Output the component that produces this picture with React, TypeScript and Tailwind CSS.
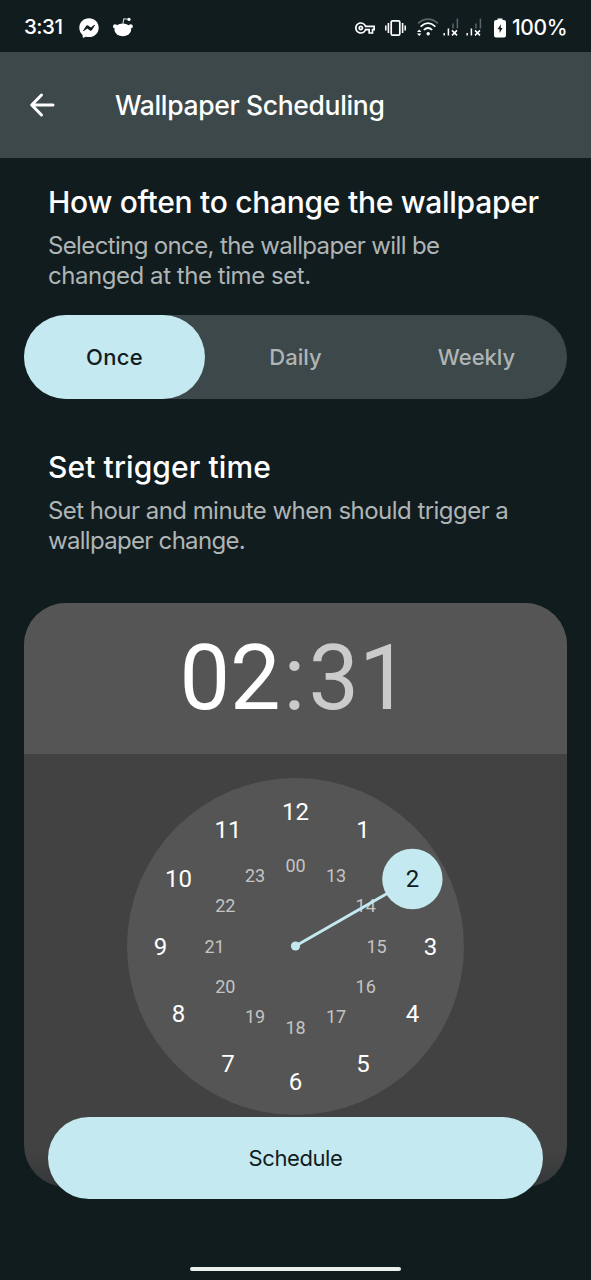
import React from "react";
import { MdOutlineVpnKey } from "react-icons/md";
import { FaFacebookMessenger } from "react-icons/fa";

const outerHours = ["12", "1", "2", "3", "4", "5", "6", "7", "8", "9", "10", "11"];
const innerHours = ["00", "13", "14", "15", "16", "17", "18", "19", "20", "21", "22", "23"];
const selectedHour = 2;

function polar(index: number, radius: number) {
  const angle = (index * Math.PI) / 6;
  return { x: 168.5 + radius * Math.sin(angle), y: 168.5 - radius * Math.cos(angle) };
}

function RedditIcon() {
  return (
    <svg width="20" height="20" viewBox="0 0 20 20" className="block">
      <ellipse cx="9.8" cy="12.8" rx="8.4" ry="6.4" fill="#fff" />
      <circle cx="2.1" cy="9.4" r="2.1" fill="#fff" />
      <circle cx="17.7" cy="9.4" r="2.1" fill="#fff" />
      <path d="M9.9 7 10.8 1.8 15.5 2.3" stroke="#cdd3d4" strokeWidth="1.1" fill="none" />
      <circle cx="16" cy="2.4" r="1.6" fill="#fff" />
    </svg>
  );
}

function VibrateIcon() {
  return (
    <svg width="21" height="18" viewBox="0 0 21 18" fill="none" className="block">
      <rect x="6.2" y="1.8" width="8.6" height="14.4" rx="1.4" stroke="#fff" strokeWidth="1.7" />
      <path d="M3.4 4V14M17.6 4V14" stroke="#fff" strokeWidth="1.6" />
      <path d="M0.8 6.4V11.6M20.2 6.4V11.6" stroke="#fff" strokeWidth="1.5" />
    </svg>
  );
}

function WifiIcon() {
  return (
    <svg width="22" height="20" viewBox="0 0 22 20" fill="none" className="block">
      <path d="M1 5.4Q11 -3 21 5.4" stroke="#59676a" strokeWidth="1.7" />
      <path d="M3.6 8.6Q11 1.8 18.4 8.6" stroke="#fff" strokeWidth="1.7" />
      <path d="M6.8 12Q11 8 15.2 12" stroke="#fff" strokeWidth="1.7" />
      <circle cx="11.2" cy="15.8" r="1.7" fill="#fff" />
      <path d="M0 14 2.2 11.6 4.4 14ZM0 15.6 2.2 18 4.4 15.6Z" fill="#fff" />
    </svg>
  );
}

function SignalIcon() {
  return (
    <svg width="17" height="19" viewBox="0 0 17 19" fill="none" className="block">
      <path d="M1.2 15V17.5M5.4 10.5V17.5" stroke="#fff" strokeWidth="1.5" />
      <path d="M10 5.5V10.5M14.4 0.5V10.5" stroke="#59676a" strokeWidth="1.5" />
      <path d="M9 12.4 14 17.4M14 12.4 9 17.4" stroke="#fff" strokeWidth="1.5" />
    </svg>
  );
}

function BatteryIcon() {
  return (
    <svg width="12" height="20" viewBox="0 0 12 20" className="block">
      <path d="M3.5 0.5h5v1.5H10a2 2 0 0 1 2 2V17.5a2 2 0 0 1-2 2H2a2 2 0 0 1-2-2V4a2 2 0 0 1 2-2H3.5Z" fill="#fff" />
      <path d="M6.8 6.2 3.6 11.2H5.6V15L8.6 9.9H6.8Z" fill="#111c1f" />
    </svg>
  );
}

function StatusBar() {
  return (
    <div className="flex h-[52px] shrink-0 items-center pt-[3px] pl-6 pr-[24px] text-white">
      <span className="w-[55px] text-[20.5px] font-medium tracking-[-0.5px] whitespace-nowrap">3:31</span>
      <FaFacebookMessenger size={20} />
      <span className="ml-[14px] -mt-[2px]"><RedditIcon /></span>
      <span className="ml-auto flex items-center">
        <MdOutlineVpnKey size={20} />
        <span className="ml-[10px]"><VibrateIcon /></span>
        <span className="ml-[11px]"><WifiIcon /></span>
        <span className="ml-[4px]"><SignalIcon /></span>
        <span className="ml-[6px]"><SignalIcon /></span>
        <span className="ml-[11px]"><BatteryIcon /></span>
        <span className="ml-[6px] w-[55px] text-[21px] font-medium tracking-[-0.4px] whitespace-nowrap">100%</span>
      </span>
    </div>
  );
}

function ClockDial() {
  const target = polar(selectedHour, 135);
  return (
    <svg width="337" height="337" viewBox="0 0 337 337" className="block font-[Roboto,sans-serif]">
      <circle cx="168.5" cy="168.5" r="168.5" fill="#555555" />
      {innerHours.map((label, i) => {
        const p = polar(i, 81);
        return (
          <text key={label} x={p.x} y={p.y + 6} textAnchor="middle" fontSize="18" fill="#c4c4c4">
            {label}
          </text>
        );
      })}
      <line x1="168.5" y1="168" x2={target.x} y2={target.y} stroke="#c4e9f0" strokeWidth="3" />
      <circle cx="168.5" cy="168" r="4.6" fill="#c4e9f0" />
      <circle cx={target.x} cy={target.y} r="30.2" fill="#c4e9f0" />
      {outerHours.map((label, i) => {
        const p = polar(i, 135);
        return (
          <text key={label} x={p.x} y={p.y + 8.1} textAnchor="middle" fontSize="24" fill={i === selectedHour ? "#111c1f" : "#ffffff"}>
            {label}
          </text>
        );
      })}
    </svg>
  );
}

export default function App() {
  return (
    <div className="relative flex h-[1280px] w-[591px] flex-col overflow-hidden bg-[#111c1f] font-[Inter,sans-serif]">
      <StatusBar />
      <header className="flex h-[106px] shrink-0 items-center bg-[#3c4849] pl-[29px] text-white">
        <svg width="26" height="26" viewBox="0 0 26 26" fill="none" stroke="#fff" strokeWidth="3" strokeLinecap="round" strokeLinejoin="round">
          <path d="M24 13H3M12.5 3 2.7 13 12.5 23" />
        </svg>
        <h1 className="ml-[60px] text-[26.5px] leading-8 font-medium tracking-[-0.35px] whitespace-nowrap">Wallpaper Scheduling</h1>
      </header>

      <section className="pt-[26px] pl-12">
        <h2 className="text-[30px] leading-9 font-medium tracking-[-0.28px] whitespace-nowrap text-white">How often to change the wallpaper</h2>
        <p className="mt-[11px] text-[24px] leading-[30px] whitespace-nowrap text-[#afb4b5]">
          <span className="tracking-[-0.64px]">Selecting once, the wallpaper will be</span><br />
          <span className="tracking-[-0.45px]">changed at the time set.</span>
        </p>
      </section>

      <div className="mx-6 mt-[24px] grid h-[84px] shrink-0 grid-cols-3 items-center rounded-full bg-[#3c4849] text-center text-[22px] font-medium text-[#afb4b5]">
        <button className="h-full rounded-full bg-[#c4e9f0] tracking-[0.3px] text-[#111c1f]">Once</button>
        <button>Daily</button>
        <button>Weekly</button>
      </div>

      <section className="pt-[50px] pl-12">
        <h2 className="text-[30px] leading-9 font-medium tracking-[0.1px] whitespace-nowrap text-white">Set trigger time</h2>
        <p className="mt-[11px] text-[24px] leading-[30px] whitespace-nowrap text-[#afb4b5]">
          <span className="tracking-[-0.54px]">Set hour and minute when should trigger a</span><br />
          <span className="tracking-[-0.7px]">wallpaper change.</span>
        </p>
      </section>

      <div className="mx-6 mt-[47px] flex h-[584px] shrink-0 flex-col items-center overflow-hidden rounded-[42px] bg-[#424242]">
        <div className="flex h-[151px] w-full shrink-0 items-center justify-center bg-[#555555] pr-[2px] font-[Roboto,sans-serif] text-[90px] leading-none text-[#cbcbcb]">
          <span className="text-white">02</span>
          <span className="mx-[3px]">:</span>
          <span>31</span>
        </div>
        <div className="mt-6"><ClockDial /></div>
      </div>

      <div className="absolute inset-x-0 bottom-0 flex h-[163px] flex-col items-center bg-linear-to-b from-transparent from-20% to-[#111c1f] to-100%">
        <button className="h-[82px] w-[495px] shrink-0 rounded-full bg-[#c4e9f0] text-[22px] tracking-[-0.4px] text-[#111c1f]">Schedule</button>
        <div className="mt-[68px] h-1 w-[211px] rounded-full bg-[#e9f0ee]" />
      </div>
    </div>
  );
}
